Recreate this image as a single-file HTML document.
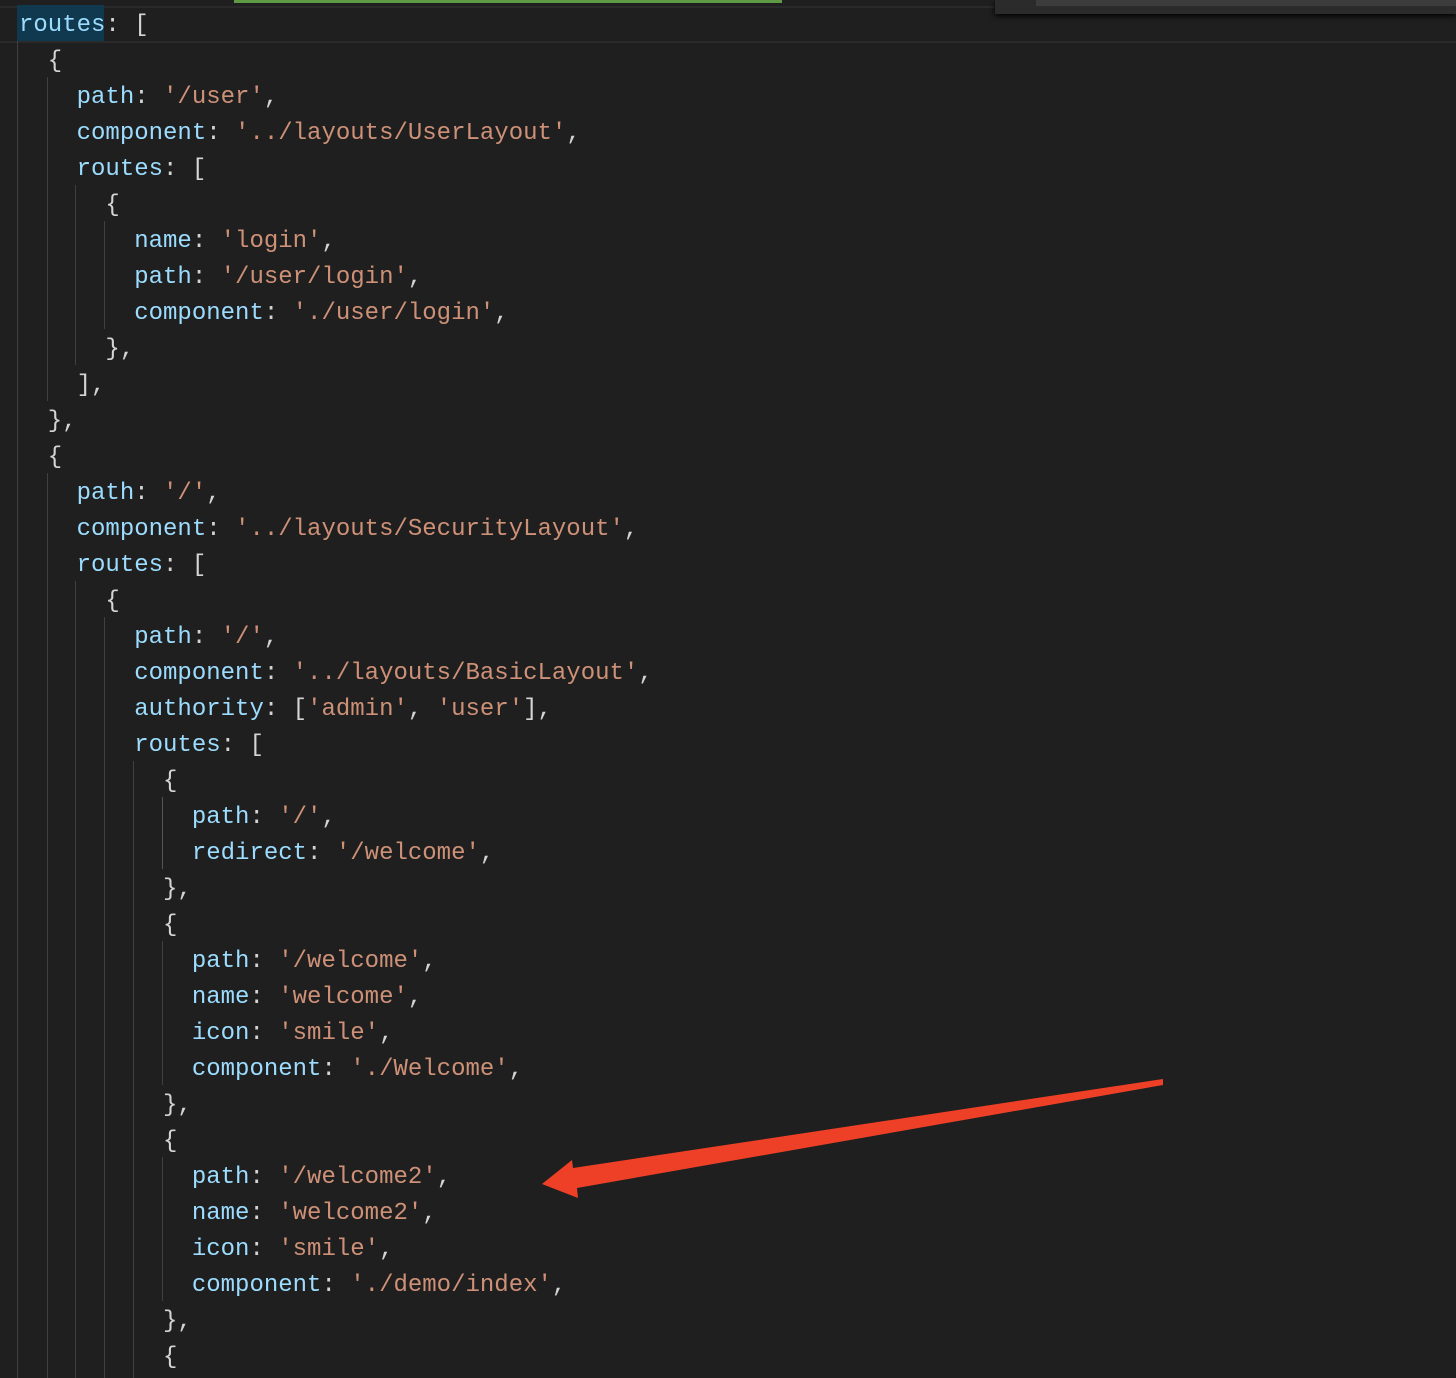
<!DOCTYPE html>
<html><head><meta charset="utf-8"><style>
html,body{margin:0;padding:0;background:#1f1f1f;width:1456px;height:1378px;overflow:hidden;position:relative}
.code{position:absolute;left:19px;top:8px;font:24px/36px "Liberation Mono","DejaVu Sans Mono",monospace;color:#d4d4d4;white-space:pre}
.k{color:#9cdcfe}.s{color:#ce9178}
.g{position:absolute;width:1px;background:#404040}
</style></head><body>
<div style="position:absolute;left:0;top:6px;width:1456px;height:33px;border-top:2px solid #2a2a2a;border-bottom:2px solid #2a2a2a"></div>
<div style="position:absolute;left:17px;top:5px;width:87px;height:36px;background:#10384f"></div>
<div style="position:absolute;left:234px;top:0;width:548px;height:3px;background:#5e9a44"></div>
<div style="position:absolute;left:995px;top:0;width:461px;height:14px;background:#2b2b2b;box-shadow:0 2px 6px #000"></div>
<div style="position:absolute;left:1036px;top:0;width:420px;height:6px;background:#3c3c3c"></div>
<div class="g" style="left:17px;top:41px;height:1337px"></div>
<div class="g" style="left:47px;top:77px;height:324px"></div>
<div class="g" style="left:47px;top:473px;height:905px"></div>
<div class="g" style="left:75px;top:185px;height:180px"></div>
<div class="g" style="left:75px;top:581px;height:797px"></div>
<div class="g" style="left:104px;top:221px;height:108px"></div>
<div class="g" style="left:104px;top:617px;height:761px"></div>
<div class="g" style="left:133px;top:761px;height:617px"></div>
<div class="g" style="left:162px;top:797px;height:72px;background:#555"></div>
<div class="g" style="left:162px;top:941px;height:144px"></div>
<div class="g" style="left:162px;top:1157px;height:144px"></div>
<div class="code"><span class="k">routes</span>: [
  {
    <span class="k">path</span>: <span class="s">'/user'</span>,
    <span class="k">component</span>: <span class="s">'../layouts/UserLayout'</span>,
    <span class="k">routes</span>: [
      {
        <span class="k">name</span>: <span class="s">'login'</span>,
        <span class="k">path</span>: <span class="s">'/user/login'</span>,
        <span class="k">component</span>: <span class="s">'./user/login'</span>,
      },
    ],
  },
  {
    <span class="k">path</span>: <span class="s">'/'</span>,
    <span class="k">component</span>: <span class="s">'../layouts/SecurityLayout'</span>,
    <span class="k">routes</span>: [
      {
        <span class="k">path</span>: <span class="s">'/'</span>,
        <span class="k">component</span>: <span class="s">'../layouts/BasicLayout'</span>,
        <span class="k">authority</span>: [<span class="s">'admin'</span>, <span class="s">'user'</span>],
        <span class="k">routes</span>: [
          {
            <span class="k">path</span>: <span class="s">'/'</span>,
            <span class="k">redirect</span>: <span class="s">'/welcome'</span>,
          },
          {
            <span class="k">path</span>: <span class="s">'/welcome'</span>,
            <span class="k">name</span>: <span class="s">'welcome'</span>,
            <span class="k">icon</span>: <span class="s">'smile'</span>,
            <span class="k">component</span>: <span class="s">'./Welcome'</span>,
          },
          {
            <span class="k">path</span>: <span class="s">'/welcome2'</span>,
            <span class="k">name</span>: <span class="s">'welcome2'</span>,
            <span class="k">icon</span>: <span class="s">'smile'</span>,
            <span class="k">component</span>: <span class="s">'./demo/index'</span>,
          },
          {</div>
<svg style="position:absolute;left:0;top:0" width="1456" height="1378"><polygon points="1163,1079 573,1168 572,1160 542,1184 578,1198 577,1188 1163,1085" fill="#ee4027"/></svg>
</body></html>
